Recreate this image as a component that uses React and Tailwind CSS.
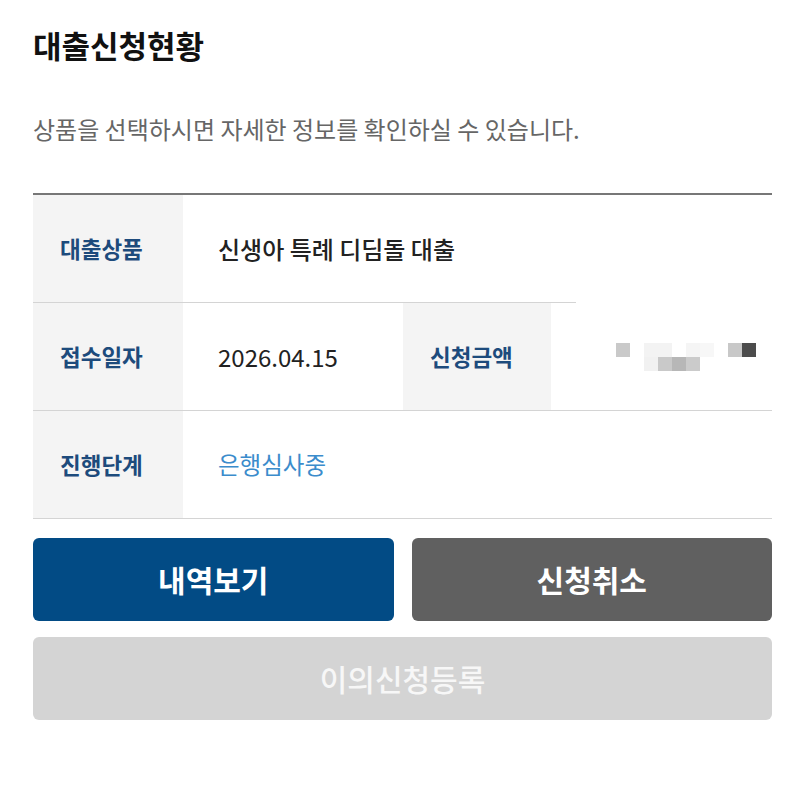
import React from 'react'

const font = { fontFamily: '"Noto Sans CJK KR", "Noto Sans", sans-serif' }

// pixelated, masked amount value
function MaskedAmount() {
  const blocks = [
    [0, 0, '#c9c9c9'], [28, 0, '#f3f3f3'], [42, 0, '#f3f3f3'], [70, 0, '#f5f5f5'], [84, 0, '#f7f7f7'],
    [112, 0, '#c8c8c8'], [126, 0, '#4c4c4c'],
    [28, 14, '#f1f1f1'], [42, 14, '#c9c9c9'], [56, 14, '#b7b7b7'], [70, 14, '#cbcbcb'],
  ]
  return (
    <svg width="140" height="28" viewBox="0 0 140 28">
      {blocks.map(([x, y, c], i) => (
        <rect key={i} x={x} y={y} width="14" height="14" fill={c} />
      ))}
    </svg>
  )
}

function Label({ children, w = 'w-[150px]' }) {
  return (
    <div className={`${w} shrink-0 bg-[#f4f4f4] flex items-center pl-[27px] text-[22.5px] font-bold text-[#1d4b7c]`}>
      {children}
    </div>
  )
}

export default function App() {
  return (
    <div className="w-[800px] h-[789px] bg-white pl-[33px] pr-[28px] pt-[25px]" style={font}>
      <h1 className="text-[31px] font-bold text-[#111] leading-[40px]">대출신청현황</h1>
      <p className="mt-[48px] text-[24px] text-[#666] leading-[32px]">
        상품을 선택하시면 자세한 정보를 확인하실 수 있습니다.
      </p>

      <div className="mt-[48px] border-t-2 border-[#777]">
        {/* 대출상품 */}
        <div className="flex h-[107px]">
          <Label>대출상품</Label>
          <div className="flex items-center pl-[35px] text-[24px] font-medium text-[#222]">
            신생아 특례 디딤돌 대출
          </div>
        </div>
        <div className="h-px w-[543px] bg-[#d4d4d4]" />

        {/* 접수일자 / 신청금액 */}
        <div className="flex h-[108px] border-b border-[#d4d4d4]">
          <Label>접수일자</Label>
          <div className="w-[220px] flex items-center pl-[35px] text-[24px] text-[#222]">2026.04.15</div>
          <Label w="w-[148px]">신청금액</Label>
          <div className="flex-1 flex items-center pl-[65px]">
            <MaskedAmount />
          </div>
        </div>

        {/* 진행단계 */}
        <div className="flex h-[108px] border-b border-[#d4d4d4]">
          <Label>진행단계</Label>
          <div className="flex items-center pl-[35px] text-[23.5px] text-[#3b8ccc]">은행심사중</div>
        </div>
      </div>

      <div className="mt-[19px] grid grid-cols-2 gap-[18px]">
        <button className="h-[83px] rounded-[6px] bg-[#024b85] text-white text-[30px] font-bold">내역보기</button>
        <button className="h-[83px] rounded-[6px] bg-[#606060] text-white text-[30px] font-bold">신청취소</button>
      </div>
      <button className="mt-[16px] w-full h-[83px] rounded-[6px] bg-[#d4d4d4] text-[#f7f7f7] text-[30px] font-medium">
        이의신청등록
      </button>
    </div>
  )
}
